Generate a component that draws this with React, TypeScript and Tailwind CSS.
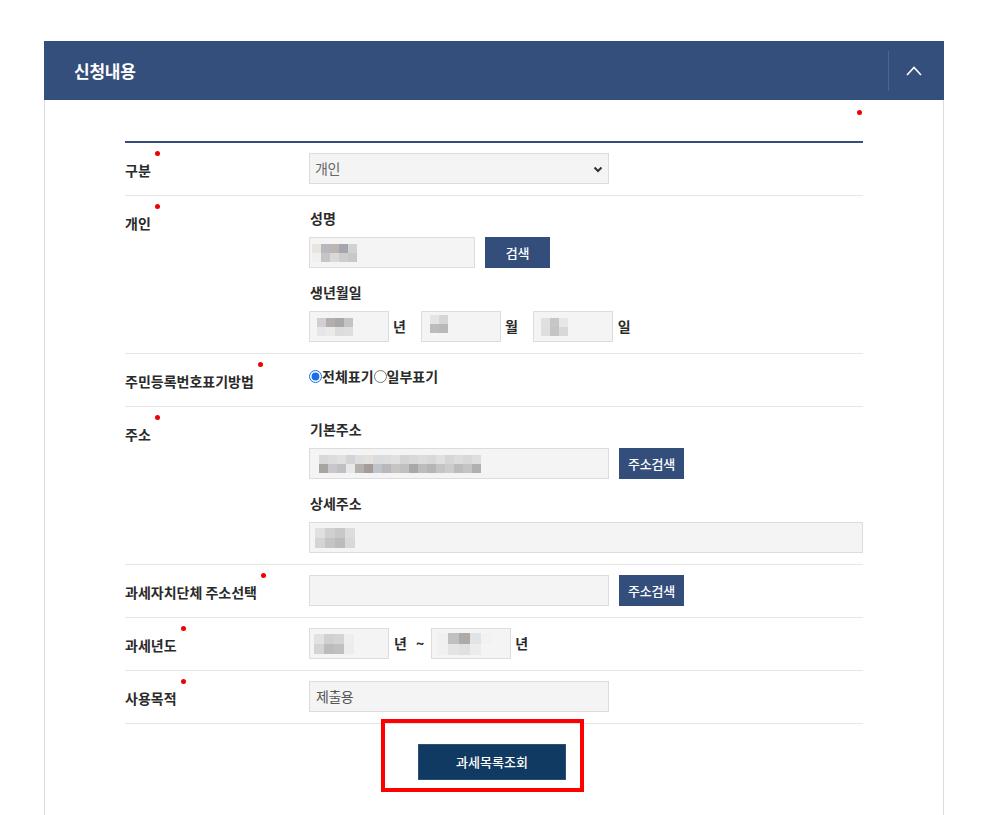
import { useState } from "react";

type Cells = string[][];

function Mosaic({ cells, size = 9 }: { cells: Cells; size?: number }) {
  return (
    <div className="flex flex-col">
      {cells.map((row, i) => (
        <div key={i} className="flex">
          {row.map((c, j) => (
            <div key={j} style={{ backgroundColor: c, width: size, height: size }} />
          ))}
        </div>
      ))}
    </div>
  );
}

const nameCells: Cells = [
  ["#e8e4e0", "#b9b9bd", "#bdb5b0", "#a5a5ad", "#d2d2d2"],
  ["#f0f0ec", "#c5c5c9", "#d9d9d9", "#d0ccc8", "#c8c8cc"],
];
const birthYearCells: Cells = [
  ["#d0d0d4", "#b4aeac", "#a8a8aa", "#c4c4c6"],
  ["#e6e6e8", "#eaeaea", "#dcdcdc", "#dedede"],
];
const birthMonthCells: Cells = [
  ["#e4e4e4", "#d6d6d6"],
  ["#bcbcbc", "#b8b8b8"],
];
const birthDayCells: Cells = [
  ["#e0e0e0", "#c6c6c6", "#e4e8ea"],
  ["#dedede", "#c4c4c4", "#d8d8d8"],
];
const addrCells: Cells = [
  ["#d8d8d8", "#dcdcdc", "#e0e0e0", "#d4d4d8", "#dedede", "#e4e0dc", "#d8dcdc", "#dcdcdc", "#e0e0e0", "#d4d4d4", "#d8d8dc", "#dcdcdc", "#d8d8d8", "#e0e0e0", "#d6d6d6", "#dcdcdc", "#d8d8d8", "#dedede"],
  ["#a8a4a0", "#c8c8cc", "#c0c0c4", "#e8e8e8", "#b4b0ac", "#a49c98", "#c0c4c8", "#b8b8bc", "#c8c4c4", "#c0c0c0", "#a8a8ac", "#bcbcbc", "#b8b4b4", "#c4c4c4", "#cccccc", "#bcbcbc", "#c4c4c4", "#b0b0b0"],
];
const detailCells: Cells = [
  ["#e0e0e0", "#d0d0d0", "#c8c8c8", "#dcdcdc"],
  ["#d4d4d4", "#c4c4c4", "#bcbcbc", "#d8d8d8"],
];
const yearFromCells: Cells = [
  ["#e2e2e2", "#d0d0d0", "#d4d4d4", "#eeeeee"],
  ["#d4d4d4", "#bcbcbc", "#c0c0c0", "#ececec"],
];
const yearToCells: Cells = [
  ["#f0f0f0", "#c0c0c0", "#aeaaa8", "#e0e4e8", "#f2f2f2"],
  ["#f0f0f0", "#e4e4e4", "#e0e0e0", "#ececec", "#f4f4f4"],
];

function Label({ text }: { text: string }) {
  return (
    <div className="pb-[17px] pt-[19px] text-[14px] leading-[16px] font-bold text-[#2a2a2a]">
      <span className="relative">
        {text}
        <span className="absolute -right-[9px] -top-[9px] size-[5px] rounded-full bg-[#f00000]" />
      </span>
    </div>
  );
}

function SubLabel({ text, first }: { text: string; first?: boolean }) {
  return (
    <div
      className={`${first ? "" : "mt-[12px]"} mb-[7px] pl-px text-[14px] leading-[24px] font-bold text-[#2a2a2a]`}
    >
      {text}
    </div>
  );
}

function Field({ w, children }: { w: string; children?: React.ReactNode }) {
  return (
    <div
      className={`${w} flex h-[31px] items-center overflow-hidden border border-[#dcdcdc] bg-[#f4f4f4] pl-[4px]`}
    >
      {children}
    </div>
  );
}

function NavyButton({ text, w }: { text: string; w: string }) {
  return (
    <button
      type="button"
      className={`${w} ml-[10px] h-[31px] bg-[#334e7b] text-[13px] font-medium tracking-[-0.25px] text-white`}
    >
      {text}
    </button>
  );
}

function Row({ label, children }: { label: string; children: React.ReactNode }) {
  return (
    <div className="grid grid-cols-[184px_1fr] border-b border-[#e6e6e6]">
      <Label text={label} />
      <div className="pb-[11px] pt-[10px]">{children}</div>
    </div>
  );
}

export default function App() {
  const [open, setOpen] = useState(true);
  const [mode, setMode] = useState("all");

  return (
    <div className="min-h-[815px] bg-white pl-[44px] pt-[41px] font-['Noto_Sans_CJK_KR','Noto_Sans',sans-serif]">
      <section className="w-[900px]">
        <header className="flex h-[59px] items-center bg-[#344f7b] pl-[30px]">
          <h2 className="flex-1 text-[17px] font-bold tracking-[-0.25px] text-white">신청내용</h2>
          <div className="h-[40px] w-px bg-[#4d6690]" />
          <button
            type="button"
            onClick={() => setOpen(!open)}
            className="mr-[5px] flex h-full w-[50px] items-center justify-center"
          >
            <svg width="16" height="10" viewBox="0 0 16 10" fill="none">
              <path d="M1 9l7-7.5L15 9" stroke="white" strokeWidth="1.6" />
            </svg>
          </button>
        </header>

        {open && (
          <div className="h-[716px] border-x border-[#dddddd] px-[80px] pt-[10px]">
            <div className="flex justify-end pr-px">
              <span className="size-[5px] rounded-full bg-[#f00000]" />
            </div>
            <div className="mt-[26px] h-[2px] bg-[#344f7b]" />

            <Row label="구분">
              <div className="relative w-[300px]">
                <select className="h-[31px] w-full appearance-none border border-[#dcdcdc] bg-[#f4f4f4] pl-[5px] text-[14px] tracking-[-0.5px] text-[#666]">
                  <option>개인</option>
                  <option>법인</option>
                </select>
                <svg
                  className="pointer-events-none absolute right-[6px] top-[13px]"
                  width="10"
                  height="7"
                  viewBox="0 0 10 7"
                  fill="none"
                >
                  <path d="M1.5 1.5l3.5 3.5 3.5-3.5" stroke="#333" strokeWidth="2" />
                </svg>
              </div>
            </Row>

            <Row label="개인">
              <SubLabel text="성명" first />
              <div className="flex">
                <Field w="w-[166px]">
                  <div className="-ml-[2px]">
                    <Mosaic cells={nameCells} />
                  </div>
                </Field>
                <NavyButton text="검색" w="w-[65px]" />
              </div>
              <SubLabel text="생년월일" />
              <div className="flex items-center text-[14px] font-bold text-[#2a2a2a]">
                <Field w="w-[80px]">
                  <div className="pl-[3px]">
                    <Mosaic cells={birthYearCells} />
                  </div>
                </Field>
                <span className="ml-[4px] mr-[15px]">년</span>
                <Field w="w-[80px]">
                  <div className="mb-[6px] pl-[4px]">
                    <Mosaic cells={birthMonthCells} />
                  </div>
                </Field>
                <span className="ml-[4px] mr-[15px]">월</span>
                <Field w="w-[80px]">
                  <div className="pl-[3px]">
                    <Mosaic cells={birthDayCells} />
                  </div>
                </Field>
                <span className="ml-[5px]">일</span>
              </div>
            </Row>

            <Row label="주민등록번호표기방법">
              <div className="flex h-[24px] items-center text-[14px] font-bold text-[#2a2a2a]">
                <label className="flex items-center">
                  <input
                    type="radio"
                    name="mode"
                    checked={mode === "all"}
                    onChange={() => setMode("all")}
                    className="size-[13px] accent-[#1a6fe8]"
                  />
                  전체표기
                </label>
                <label className="flex items-center">
                  <input
                    type="radio"
                    name="mode"
                    checked={mode === "part"}
                    onChange={() => setMode("part")}
                    className="size-[13px] accent-[#1a6fe8]"
                  />
                  일부표기
                </label>
              </div>
            </Row>

            <Row label="주소">
              <SubLabel text="기본주소" first />
              <div className="flex">
                <Field w="w-[300px]">
                  <div className="pl-[5px]">
                    <Mosaic cells={addrCells} />
                  </div>
                </Field>
                <NavyButton text="주소검색" w="w-[65px]" />
              </div>
              <SubLabel text="상세주소" />
              <Field w="w-full">
                <div className="pl-px">
                  <Mosaic cells={detailCells} size={10} />
                </div>
              </Field>
            </Row>

            <Row label="과세자치단체 주소선택">
              <div className="flex">
                <Field w="w-[300px]" />
                <NavyButton text="주소검색" w="w-[65px]" />
              </div>
            </Row>

            <Row label="과세년도">
              <div className="flex items-center text-[14px] font-bold text-[#2a2a2a]">
                <Field w="w-[80px]">
                  <Mosaic cells={yearFromCells} size={10} />
                </Field>
                <span className="ml-[5px]">년</span>
                <span className="ml-[9px]">~</span>
                <div className="ml-[7px]">
                  <Field w="w-[80px]">
                    <div className="pl-px">
                      <Mosaic cells={yearToCells} size={11} />
                    </div>
                  </Field>
                </div>
                <span className="ml-[4px]">년</span>
              </div>
            </Row>

            <Row label="사용목적">
              <Field w="w-[300px]">
                <span className="pl-[2px] text-[14px] tracking-[-0.5px] text-[#555]">제출용</span>
              </Field>
            </Row>

            <div className="pl-[293px] pt-[20px]">
              <div className="relative w-[148px]">
                <button
                  type="button"
                  className="h-[36px] w-[148px] border border-[#2a5178] bg-[#113a62] text-[13px] font-medium text-white"
                >
                  과세목록조회
                </button>
                <div className="pointer-events-none absolute -left-[37px] -top-[25px] h-[73px] w-[203px] border-[4px] border-[#ff0000]" />
              </div>
            </div>
          </div>
        )}
      </section>
    </div>
  );
}
